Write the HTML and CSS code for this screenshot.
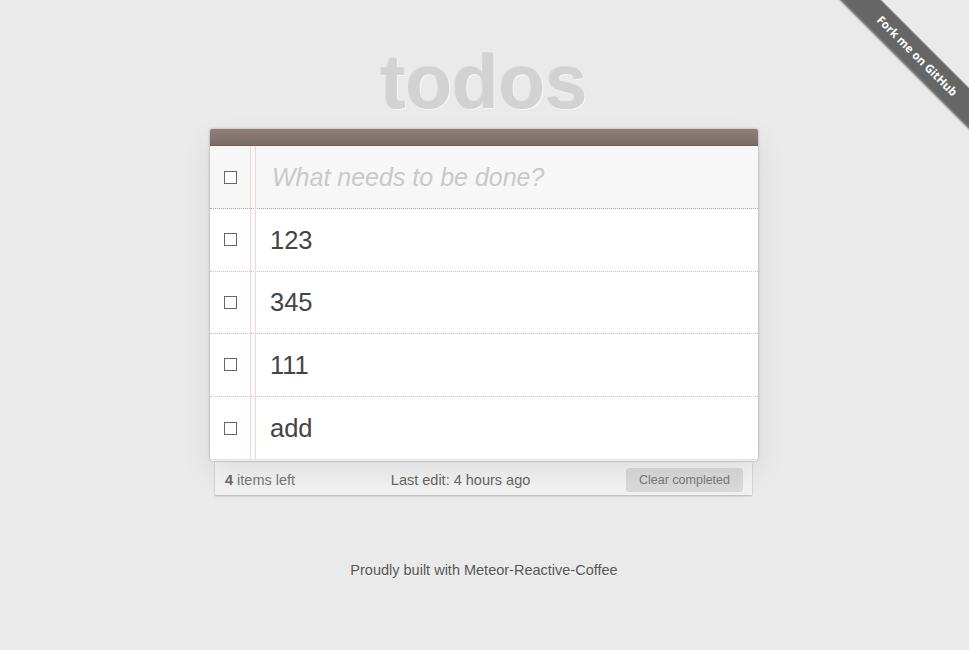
FILE: index.html
```
<!DOCTYPE html>
<html lang="en">
<head>
<meta charset="utf-8">
<title>Todos</title>
<link rel="stylesheet" href="styles.css">
</head>
<body>
<a class="ribbon-wrap" href="#"><span class="ribbon">Fork me on GitHub</span></a>
<div class="page">
  <h1 class="title">todos</h1>
  <section class="app">
    <div class="app-bar"></div>
    <div class="row row-new"><span class="check"></span><span class="new-todo">What needs to be done?</span></div>
    <ul class="list">
      <li class="row"><span class="check"></span><span class="label">123</span></li>
      <li class="row"><span class="check"></span><span class="label">345</span></li>
      <li class="row"><span class="check"></span><span class="label">111</span></li>
      <li class="row"><span class="check"></span><span class="label">add</span></li>
    </ul>
  </section>
  <footer class="stats">
    <span class="count"><b>4</b> items left</span>
    <span class="last-edit">Last edit: 4 hours ago</span>
    <button class="clear">Clear completed</button>
  </footer>
  <p class="credits">Proudly built with Meteor-Reactive-Coffee</p>
</div>
</body>
</html>
```
FILE: styles.css
```
* { box-sizing: border-box; }

body {
  margin: 0;
  padding-right: 1px;
  background: #eaeaea;
  font-family: "Liberation Sans", Arial, sans-serif;
  color: #4d4d4d;
}

.page {
  width: 548px;
  margin: 0 auto;
  padding-top: 44px;
}

.title {
  margin: 0 0 9px;
  font-size: 76px;
  line-height: 76px;
  font-weight: bold;
  text-align: center;
  color: #d2d2d2;
  text-shadow: -1px -1px 0 rgba(0, 0, 0, 0.08), 1px 1px 0 rgba(255, 255, 255, 0.6);
}

.app {
  position: relative;
  background: #fff;
  border-radius: 2px 2px 0 0;
  box-shadow: 0 0 3px rgba(0, 0, 0, 0.28),
              0 3px 0 -1px #fbfbfb,
              0 3px 2px -1px rgba(0, 0, 0, 0.3),
              0 12px 30px rgba(0, 0, 0, 0.08);
}

.app::before {
  content: "";
  position: absolute;
  top: 0;
  bottom: 0;
  left: 40px;
  width: 4px;
  border-left: 1px solid #f0d6d6;
  border-right: 1px solid #f0d6d6;
  z-index: 1;
}

.app-bar {
  position: relative;
  z-index: 2;
  height: 17px;
  border-radius: 2px 2px 0 0;
  background: linear-gradient(#917f79, #7b6c66);
  border-bottom: 1px solid #6c615c;
}

.list {
  margin: 0;
  padding: 0;
  list-style: none;
}

.row {
  display: grid;
  grid-template-columns: 40px 1fr;
  align-items: center;
  height: 62.6px;
  border-bottom: 1px dotted #c4c4c4;
  background: #fff;
}

.row:last-child { border-bottom: none; }

.row-new {
  height: 63px;
  background: #f7f7f7;
  border-bottom: 1px dotted #a8a8a8;
}

.check {
  justify-self: center;
  width: 13px;
  height: 13px;
  border: 1px solid #666;
  background: #fff;
}

.label,
.new-todo {
  padding-left: 20px;
  font-size: 25.5px;
  line-height: 30px;
  color: #444;
}

.new-todo {
  padding-left: 22px;
  font-size: 25px;
  font-style: italic;
  color: #c9c9c9;
}

.stats {
  display: flex;
  justify-content: space-between;
  align-items: center;
  height: 33px;
  margin: 3px 6px 0 5px;
  padding: 2px 9px 0 10px;
  background: #f1f1f1;
  box-shadow: 0 1px 2px rgba(0, 0, 0, 0.22), 0 0 1px rgba(0, 0, 0, 0.1);
  font-size: 14.5px;
  color: #777;
}

.count b { color: #666; }

.last-edit { color: #666; }

.clear {
  height: 24px;
  width: 117px;
  padding: 0;
  border: none;
  border-radius: 3px;
  background: #d9d9d9;
  font-family: inherit;
  font-size: 12.5px;
  color: #777;
}

.credits {
  margin: 67px 0 0;
  text-align: center;
  font-size: 14.5px;
  line-height: 17px;
  color: #555;
  text-shadow: 0 1px 0 rgba(255, 255, 255, 0.7);
}

.ribbon-wrap {
  position: absolute;
  top: 0;
  right: 0;
  width: 150px;
  height: 150px;
  overflow: hidden;
  text-decoration: none;
}

.ribbon {
  position: absolute;
  left: -12px;
  top: 42px;
  width: 220px;
  height: 28px;
  transform: rotate(45deg);
  background: #666;
  border-top: 1px solid #7a7a7a;
  border-bottom: 1px solid #7a7a7a;
  box-shadow: 0 1px 2px rgba(0, 0, 0, 0.5);
  font-family: "Open Sans", sans-serif;
  font-weight: 700;
  font-size: 11.5px;
  line-height: 26px;
  text-align: center;
  color: #fff;
}
```
